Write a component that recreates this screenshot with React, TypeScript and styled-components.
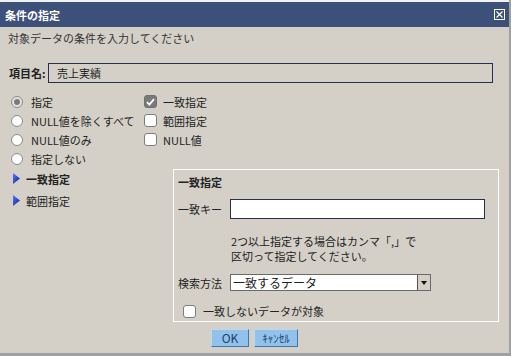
import React from 'react';
import styled, { createGlobalStyle } from 'styled-components';

const GlobalStyle = createGlobalStyle`
    html, body {
        margin: 0;
        padding: 0;
    }
    body {
        background: #a0a0a0;
        font-family: 'Noto Sans CJK JP', 'Noto Sans', sans-serif;
    }
`;

const Dialog = styled.div`
    width: 509px;
    height: 353px;
    box-sizing: border-box;
    border-top: 2px solid #f2f2f2;
    background: #d4d0c8;
    display: flex;
    flex-direction: column;
    font-size: 11px;
    color: #222;
`;

const TitleBar = styled.div`
    height: 25px;
    background: #3d5079;
    display: flex;
    align-items: center;
    justify-content: space-between;
    padding: 0 4px 0 5px;
    color: #fff;
    font-weight: bold;
`;

const Subtitle = styled.div`
    margin: 4px 0 0 8px;
    line-height: 14px;
    color: #333;
`;

const ItemRow = styled.div`
    margin-top: 18px;
    padding-left: 9px;
    display: flex;
    align-items: center;
`;

const ItemLabel = styled.span`
    width: 39px;
    font-weight: bold;
`;

const ItemBox = styled.div`
    width: 445px;
    height: 20px;
    box-sizing: border-box;
    border: 1px solid #2a2d52;
    padding-left: 8px;
    line-height: 18px;
`;

const Options = styled.div`
    margin-top: 9px;
    padding-left: 11px;
    display: grid;
    grid-template-columns: 133px auto;
    grid-auto-rows: 19px;
`;

const Choice = styled.label<{ $gap: number }>`
    display: flex;
    align-items: center;
    gap: ${(p) => p.$gap}px;
    white-space: nowrap;
`;

const Radio = styled.span<{ $on?: boolean }>`
    width: 12px;
    height: 12px;
    box-sizing: border-box;
    border-radius: 50%;
    border: 1px solid #8a8a8a;
    background: ${(p) => (p.$on ? '#e4e4e4' : '#fff')};
    display: flex;
    align-items: center;
    justify-content: center;
    &::after {
        content: '';
        display: ${(p) => (p.$on ? 'block' : 'none')};
        width: 6px;
        height: 6px;
        border-radius: 50%;
        background: #7a7a7a;
    }
`;

const Box = styled.span<{ $on?: boolean }>`
    width: 13px;
    height: 13px;
    box-sizing: border-box;
    border-radius: 3px;
    border: 1px solid ${(p) => (p.$on ? '#707070' : '#7d7d7d')};
    background: ${(p) => (p.$on ? '#7a7a7a' : '#fff')};
    display: flex;
    align-items: center;
    justify-content: center;
`;

const Lower = styled.div`
    margin-top: 1px;
    display: flex;
`;

const Nav = styled.div`
    width: 173px;
    padding-left: 13px;
    box-sizing: border-box;
    display: flex;
    flex-direction: column;
    gap: 3px;
`;

const NavItem = styled.div<{ $active?: boolean }>`
    height: 19px;
    display: flex;
    align-items: center;
    gap: 6px;
    font-weight: ${(p) => (p.$active ? 'bold' : 'normal')};
`;

const Panel = styled.div`
    width: 326px;
    height: 153px;
    box-sizing: border-box;
    border: 1px solid #fff;
    padding: 5px 0 0 4px;
    display: flex;
    flex-direction: column;
`;

const PanelTitle = styled.div`
    line-height: 14px;
    font-weight: bold;
`;

const FieldRow = styled.div<{ $top: number }>`
    margin-top: ${(p) => p.$top}px;
    display: flex;
    align-items: center;
`;

const FieldLabel = styled.span`
    width: 52px;
`;

const TextInput = styled.div`
    width: 255px;
    height: 20px;
    box-sizing: border-box;
    border: 1px solid #2a2d52;
    background: #fff;
`;

const Help = styled.div`
    margin: 15px 0 0 53px;
    line-height: 15px;
`;

const Select = styled.div`
    width: 201px;
    height: 17px;
    box-sizing: border-box;
    border: 1px solid #6a6a6a;
    background: #fff;
    display: flex;
    line-height: 15px;
    font-size: 12px;
`;

const SelectText = styled.span`
    flex: 1;
    padding-left: 2px;
`;

const SelectArrow = styled.span`
    width: 12px;
    background: #d4d0c8;
    border-left: 1px solid #555;
    display: flex;
    align-items: center;
    justify-content: center;
`;

const Buttons = styled.div`
    margin-top: 7px;
    display: flex;
    justify-content: center;
    gap: 5px;
`;

const Button = styled.button<{ $w: number; $size: number }>`
    width: ${(p) => p.$w}px;
    height: 18px;
    padding: 0;
    box-sizing: border-box;
    background: #90c2ec;
    border: 1px solid;
    border-color: #b8daf5 #3f77b0 #3f77b0 #b8daf5;
    color: #243f6c;
    font-family: inherit;
    font-size: ${(p) => p.$size}px;
    line-height: 16px;
`;

const Check = () => (
    <svg width='9' height='8' viewBox='0 0 9 8'>
        <path d='M1 4.2 L3.4 6.6 L8 1.2' stroke='#fff' strokeWidth='1.8' fill='none' />
    </svg>
);

const Triangle = () => (
    <svg width='7' height='11' viewBox='0 0 7 11'>
        <defs>
            <linearGradient id='tri' x1='0' y1='0' x2='1' y2='1'>
                <stop offset='0' stopColor='#5a78ff' />
                <stop offset='1' stopColor='#0a1a9a' />
            </linearGradient>
        </defs>
        <polygon points='0,0 7,5.5 0,11' fill='url(#tri)' />
    </svg>
);

const CloseIcon = () => (
    <svg width='11' height='11' viewBox='0 0 11 11'>
        <rect x='0.5' y='0.5' width='10' height='10' stroke='#fff' fill='none' />
        <path d='M2.5 2.5 L8.5 8.5 M8.5 2.5 L2.5 8.5' stroke='#fff' strokeWidth='1.2' />
    </svg>
);

const radios = ['指定', 'NULL値を除くすべて', 'NULL値のみ', '指定しない'];
const checks = ['一致指定', '範囲指定', 'NULL値'];

export default function App() {
    return (
        <>
            <GlobalStyle />
            <Dialog>
                <TitleBar>
                    <span>条件の指定</span>
                    <CloseIcon />
                </TitleBar>
                <Subtitle>対象データの条件を入力してください</Subtitle>
                <ItemRow>
                    <ItemLabel>項目名:</ItemLabel>
                    <ItemBox>売上実績</ItemBox>
                </ItemRow>
                <Options>
                    {radios.map((r, i) => (
                        <React.Fragment key={r}>
                            <Choice $gap={8}>
                                <Radio $on={i === 0} />
                                {r}
                            </Choice>
                            {checks[i] ? (
                                <Choice $gap={6}>
                                    <Box $on={i === 0}>{i === 0 && <Check />}</Box>
                                    {checks[i]}
                                </Choice>
                            ) : (
                                <span />
                            )}
                        </React.Fragment>
                    ))}
                </Options>
                <Lower>
                    <Nav>
                        <NavItem $active>
                            <Triangle />
                            一致指定
                        </NavItem>
                        <NavItem>
                            <Triangle />
                            範囲指定
                        </NavItem>
                    </Nav>
                    <Panel>
                        <PanelTitle>一致指定</PanelTitle>
                        <FieldRow $top={10}>
                            <FieldLabel>一致キー</FieldLabel>
                            <TextInput />
                        </FieldRow>
                        <Help>
                            2つ以上指定する場合はカンマ「,」で
                            <br />
                            区切って指定してください。
                        </Help>
                        <FieldRow $top={10}>
                            <FieldLabel>検索方法</FieldLabel>
                            <Select>
                                <SelectText>一致するデータ</SelectText>
                                <SelectArrow>
                                    <svg width='6' height='4' viewBox='0 0 6 4'>
                                        <polygon points='0,0 6,0 3,4' fill='#111' />
                                    </svg>
                                </SelectArrow>
                            </Select>
                        </FieldRow>
                        <FieldRow $top={12}>
                            <Choice $gap={7} style={{ marginLeft: 5 }}>
                                <Box />
                                一致しないデータが対象
                            </Choice>
                        </FieldRow>
                    </Panel>
                </Lower>
                <Buttons>
                    <Button $w={38} $size={12}>OK</Button>
                    <Button $w={44} $size={11}>ｷｬﾝｾﾙ</Button>
                </Buttons>
            </Dialog>
        </>
    );
}
